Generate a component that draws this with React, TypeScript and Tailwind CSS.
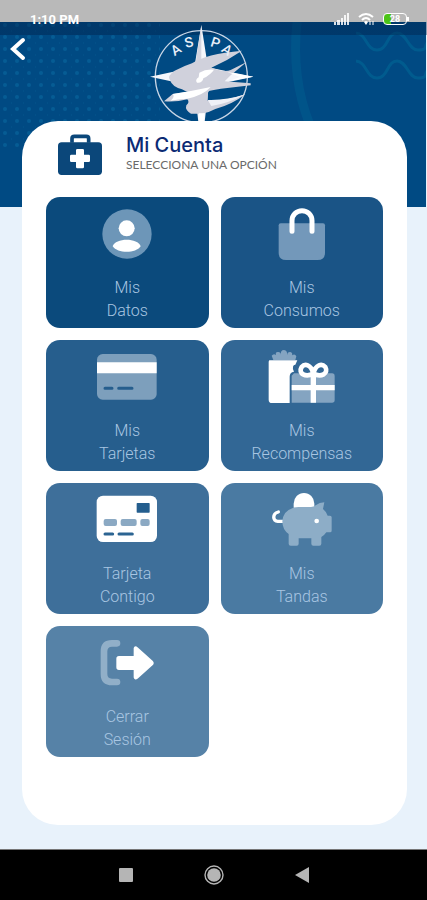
import type { ReactNode } from "react";

type MenuItem = {
  id: string;
  label: [string, string];
  bg: string;
  icon: ReactNode;
};

const MENU: MenuItem[] = [
  {
    id: "datos",
    label: ["Mis", "Datos"],
    bg: "bg-[#0b4a7c]",
    icon: (
      <>
        <circle cx="108" cy="84" r="74" fill="#6d96b8" />
        <circle cx="107" cy="67" r="24" fill="#fff" />
        <path d="M65 121c8-26 76-26 84 0-14 22-70 22-84 0z" fill="#fff" />
      </>
    ),
  },
  {
    id: "consumos",
    label: ["Mis", "Consumos"],
    bg: "bg-[#1a5486]",
    icon: (
      <>
        <path d="M44 52H171q6 0 6 6V140q0 22-22 22H60q-22 0-22-22V58q0-6 6-6z" fill="#7398ba" />
        <path d="M78 76V44a30 30 0 0 1 60 0V76" fill="none" stroke="#fff" strokeWidth="15" strokeLinecap="round" />
      </>
    ),
  },
  {
    id: "tarjetas",
    label: ["Mis", "Tarjetas"],
    bg: "bg-[#265e8d]",
    icon: (
      <>
        <rect x="18" y="15" width="179" height="137" rx="17" fill="#7d9fbc" />
        <path d="M18 40H197V73H18z" fill="#fff" />
        <path d="M42 118H63M83 118H123" stroke="#265e8d" strokeWidth="9" strokeLinecap="round" />
      </>
    ),
  },
  {
    id: "recompensas",
    label: ["Mis", "Recompensas"],
    bg: "bg-[#326795]",
    icon: (
      <>
        <path
          d="M22 33L17 20Q23 12 30 18Q27 8 37 9Q45 10 44 19Q43 3 54 3Q65 4 63 19Q64 8 73 9Q81 12 78 19Q87 13 91 22L88 33z"
          fill="#84a4c1"
        />
        <path d="M10 34H94L88 47Q81 47 81 55Q79 61 84 68Q71 69 71 83V162H18Q8 162 8 152V40Q8 36 10 34z" fill="#fff" />
        <path d="M84 73H198Q206 73 206 81V153Q206 161 198 161H77V80z" fill="#84a4c1" />
        <path d="M77 116H206M142 73V161" stroke="#fff" strokeWidth="16" />
        <path
          d="M142 74C135 45 116 43 107 54C95 74 119 86 142 74C149 45 168 43 178 54C189 74 165 86 142 74z"
          fill="#326795"
          stroke="#fff"
          strokeWidth="14"
          strokeLinejoin="round"
        />
      </>
    ),
  },
  {
    id: "contigo",
    label: ["Tarjeta", "Contigo"],
    bg: "bg-[#3e6f9a]",
    icon: (
      <>
        <rect x="17" y="11" width="181" height="139" rx="19" fill="#fff" />
        <rect x="137" y="33" width="39" height="29" rx="2" fill="#245e8e" />
        <g fill="#8ba9c3">
          <rect x="38" y="81" width="40" height="21" rx="6" />
          <rect x="89" y="81" width="48" height="21" rx="6" />
          <rect x="148" y="81" width="28" height="21" rx="6" />
        </g>
        <path d="M42 126H65M84 126H124" stroke="#2c6492" strokeWidth="9" strokeLinecap="round" />
      </>
    ),
  },
  {
    id: "tandas",
    label: ["Mis", "Tandas"],
    bg: "bg-[#4a7aa2]",
    icon: (
      <>
        <path d="M83 47V35a31 32 0 0 1 62 0V47z" fill="#fff" />
        <path d="M52 88H35C20 88 18 65 37 60" fill="none" stroke="#fff" strokeWidth="10" strokeLinecap="round" />
        <path
          d="M97 45H135Q143 45 149 40Q161 31 175 31L171 51Q181 59 185 71H192Q197 71 197 76V116Q197 121 192 121H181Q175 130 166 135V155Q166 161 160 161H142Q136 161 136 155V139H98V155Q98 161 92 161H74Q68 161 68 155V126Q49 113 49 88Q52 49 97 45z"
          fill="#8dadc7"
        />
        <circle cx="152" cy="87" r="7" fill="#fff" />
      </>
    ),
  },
  {
    id: "salir",
    label: ["Cerrar", "Sesión"],
    bg: "bg-[#5682a7]",
    icon: (
      <>
        <path
          d="M78 25H63Q39 25 39 49V117Q39 141 63 141H78"
          fill="none"
          stroke="#91afc8"
          strokeWidth="20"
          strokeLinecap="round"
        />
        <path
          d="M84 67H132V40Q133 36 137 40L182 80Q186 84 182 88L137 128Q133 132 132 127V101H84Q80 101 80 97V71Q80 67 84 67z"
          fill="#fff"
          stroke="#fff"
          strokeWidth="8"
          strokeLinejoin="round"
        />
      </>
    ),
  },
];

function StatusBar() {
  return (
    <div className="relative flex h-[35px] items-start justify-between bg-[linear-gradient(#b9b9b9_22px,rgba(0,30,70,0.4)_22px)] pl-[30px] pr-5 pt-3 text-white">
      <span className="font-[Roboto,sans-serif] text-[13px] font-bold leading-4">1:10 PM</span>
      <div className="flex items-center gap-2">
        <svg width="16" height="14" viewBox="0 0 16 14" fill="currentColor" aria-hidden="true">
          <path d="M0 10h2v3H0zM3 8h3v5H3zM7 6h2v7H7zM10 3h2v10h-2zM13 1h2v12h-2z" opacity=".85" />
        </svg>
        <svg width="17" height="14" viewBox="0 0 17 14" fill="none" stroke="currentColor" strokeWidth="2" aria-hidden="true">
          <path d="M1 5q7-6 14 0M4 8q4-4 8 0" />
          <path d="M6 10q2-2 4 0l-2 3z" fill="currentColor" stroke="none" />
          <path d="M12 9v4M15 9v4" strokeWidth="1" />
        </svg>
        <div className="relative flex h-3 w-6 items-center justify-center rounded-sm border border-white bg-[linear-gradient(90deg,#4cc417_7px,transparent_7px)] font-[Roboto,sans-serif] text-[9px] font-bold leading-none">
          28
          <span className="absolute -right-[3px] h-1 w-0.5 bg-white" />
        </div>
      </div>
    </div>
  );
}

function Backdrop() {
  return (
    <div className="absolute inset-x-0 top-0 mr-px h-[207px] overflow-hidden bg-[#004a83]" aria-hidden="true">
      <svg className="absolute left-0 top-0" width="160" height="207">
        <defs>
          <pattern id="dots" width="12" height="12" patternUnits="userSpaceOnUse" x="-1" y="3">
            <circle cx="6" cy="10" r="2" fill="#0868a0" opacity=".6" />
            <circle cx="0" cy="4" r="1" fill="#0868a0" opacity=".25" />
          </pattern>
        </defs>
        <rect width="160" height="150" fill="url(#dots)" />
      </svg>
      <svg className="absolute right-0 top-0" width="140" height="207" fill="none" stroke="#006393">
        <path d="M11 22Q5 78 24 125" strokeWidth="9" opacity=".4" />
        <g strokeWidth="3" opacity=".7">
          <path d="M70 33C81 34 80 50 91 50S101 33 111 33S122 50 132 50S138 47 141 43" />
          <path d="M70 61C81 62 80 78 91 78S101 61 111 61S122 78 132 78S138 75 141 71" />
        </g>
      </svg>
    </div>
  );
}

function Logo() {
  return (
    <svg width="125" height="105" viewBox="0 0 375 315" role="img" aria-label="ASPA">
      <circle cx="184" cy="170" r="138" fill="none" stroke="#c9d6e6" strokeWidth="4" />
      <path d="M184 15L204 142L340 170L206 199L193 315H176L163 199L30 170L163 142z" fill="#f5f6fb" />
      <path d="M184 15V140L165 142z" fill="#d3d4df" />
      {/* upper bird */}
      <path
        d="M306 92Q262 122 214 143L236 150Q258 156 272 150L320 126L272 166L254 184L332 190V196L262 204Q222 208 196 216Q150 224 126 208Q96 200 90 180Q80 168 104 152Q132 138 156 130Q196 102 306 92z"
        fill="#d0d1dc"
      />
      <path d="M178 158Q198 146 222 149Q212 164 190 175Q187 190 171 188Q164 180 176 172z" fill="#fff" />
      <path d="M262 156L340 170L268 183L300 171z" fill="#fff" />
      {/* lower bird */}
      <path
        d="M72 244L98 222Q150 214 214 200L204 218L203 242Q258 244 316 223Q276 254 226 267Q206 278 186 281H153Q134 270 139 256Q150 247 142 238Q108 247 72 244z"
        fill="#d0d1dc"
      />
      <path d="M98 222Q150 214 212 201Q190 226 142 236Q112 238 92 242Q106 230 98 222z" fill="#fff" />
      <path d="M203 240Q258 242 316 223Q262 252 214 258z" fill="#f0f1f7" />
      <path d="M177 280H193L190 315H180z" fill="#fff" />
      <g fill="#e8eef8" fontFamily="Roboto, sans-serif" fontSize="42" fontWeight="500" textAnchor="middle">
        <text transform="translate(115 101) rotate(-32)">A</text>
        <text transform="translate(150 81) rotate(-15)">S</text>
        <text transform="translate(222 82) rotate(18)">P</text>
        <text transform="translate(253 101) rotate(34)">A</text>
      </g>
    </svg>
  );
}

function MenuTile({ item }: { item: MenuItem }) {
  return (
    <button
      type="button"
      className={`flex h-[131px] flex-col items-center rounded-[14px] pt-[9px] font-[Roboto,sans-serif] text-base font-light leading-[23px] text-[#a9c6e2] ${item.bg}`}
    >
      <svg width="72" height="54" viewBox="0 0 216 162" className="mb-4" aria-hidden="true">
        {item.icon}
      </svg>
      <span>{item.label[0]}</span>
      <span>{item.label[1]}</span>
    </button>
  );
}

function NavBar() {
  return (
    <nav className="flex h-[51px] items-center justify-center gap-16 border-t border-[#777] bg-black text-[#b5b5b5]">
      <button type="button" aria-label="Recientes" className="flex w-6 justify-center">
        <svg width="14" height="14" fill="currentColor">
          <rect width="14" height="14" rx="1" />
        </svg>
      </button>
      <button type="button" aria-label="Inicio" className="flex w-6 justify-center">
        <svg width="20" height="20" fill="currentColor">
          <circle cx="10" cy="10" r="9" fill="none" stroke="currentColor" strokeWidth="1.4" />
          <circle cx="10" cy="10" r="6.8" />
        </svg>
      </button>
      <button type="button" aria-label="Atrás" className="flex w-6 justify-center">
        <svg width="14" height="16" fill="currentColor">
          <path d="M14 0V16L0 8z" />
        </svg>
      </button>
    </nav>
  );
}

export default function App() {
  return (
    <div className="relative flex min-h-screen flex-col bg-[#e8f2fb]">
      <Backdrop />
      <StatusBar />

      <header className="relative -mt-[15px] grid grid-cols-[1fr_auto_1fr] items-start pr-[22px]">
        <button type="button" aria-label="Regresar" className="ml-2 mt-4 w-5 text-white">
          <svg width="20" height="26" fill="none" stroke="currentColor" strokeWidth="4" strokeLinecap="round">
            <path d="M15 4L5 13L15 22" />
          </svg>
        </button>
        <Logo />
      </header>

      <main className="relative mx-5 -mt-1 mb-6 ml-[22px] flex-1 rounded-[36px] bg-white px-6 pb-16 pt-3">
        <div className="mb-[21px] flex items-start gap-6 pl-3">
          <svg width="44" height="42" viewBox="0 0 132 126" className="mt-px" aria-hidden="true">
            <path d="M42 26V14Q42 7 49 7H85Q92 7 92 14V26" fill="none" stroke="#0b477a" strokeWidth="11" />
            <rect x="0" y="25" width="132" height="98" rx="11" fill="#0b477a" />
            <path
              d="M58 45H74Q78 45 78 49V62H92Q96 62 96 66V80Q96 84 92 84H78V99Q78 103 74 103H58Q54 103 54 99V84H40Q36 84 36 80V66Q36 62 40 62H54V49Q54 45 58 45z"
              fill="#fff"
            />
          </svg>
          <div>
            <h1 className="font-[Inter,sans-serif] text-xl font-medium leading-6 text-[#0b2a74]">Mi Cuenta</h1>
            <p className="font-[Lato,sans-serif] text-xs leading-4 text-[#6a6a6a]">SELECCIONA UNA OPCIÓN</p>
          </div>
        </div>

        <div className="grid grid-cols-2 gap-3">
          {MENU.map((item) => (
            <MenuTile key={item.id} item={item} />
          ))}
        </div>
      </main>

      <NavBar />
    </div>
  );
}
